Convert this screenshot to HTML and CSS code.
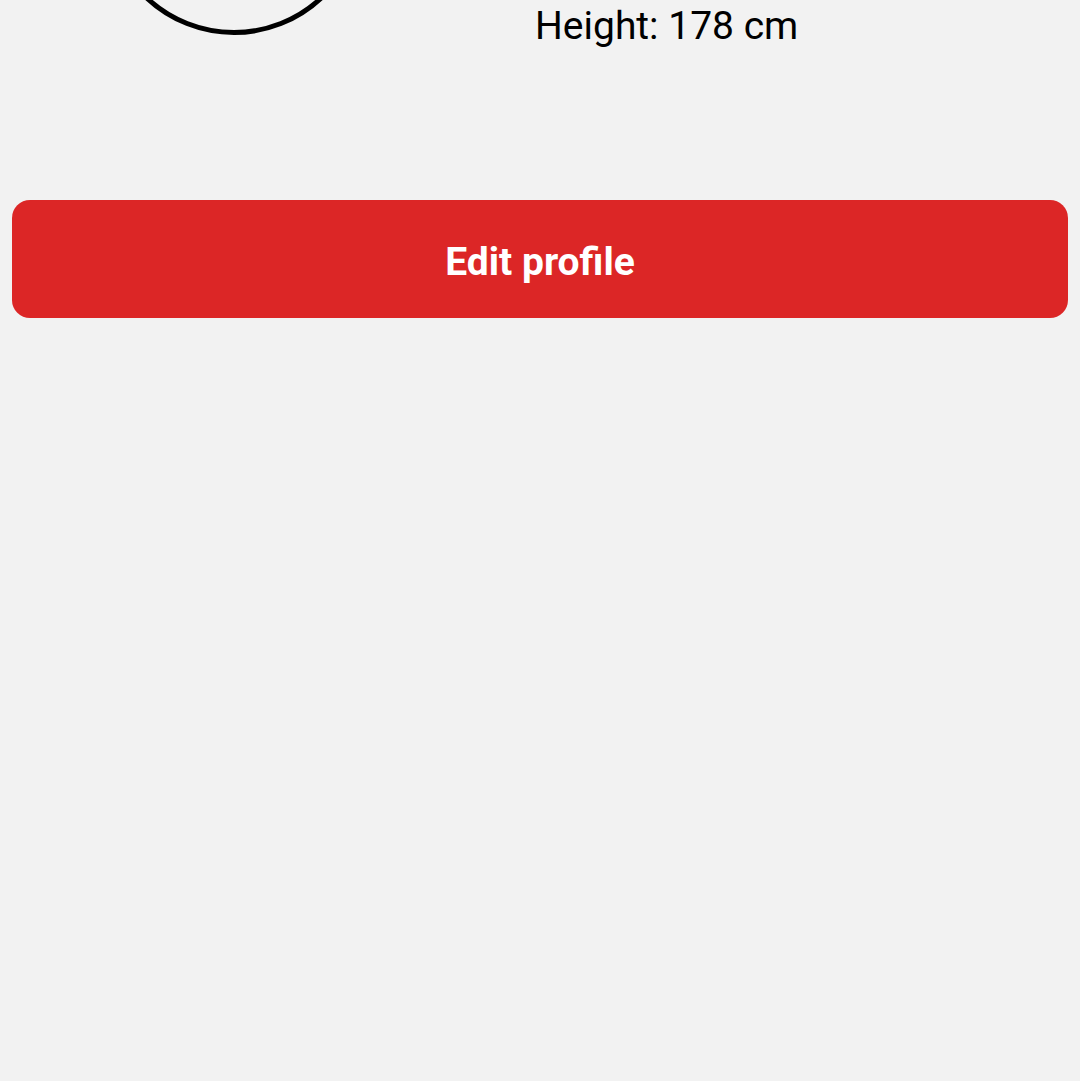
FILE: index.html
```html
<!DOCTYPE html>
<html lang="en">
<head>
<meta charset="utf-8">
<title>Profile</title>
<link rel="stylesheet" href="styles.css">
</head>
<body>
<main class="page">
  <section class="profile">
    <div class="avatar"></div>
    <div class="info">
      <p class="info-line">Height: 178 cm</p>
    </div>
  </section>
  <button class="edit-btn" type="button">Edit profile</button>
</main>
</body>
</html>
```

FILE: styles.css
```css
html, body {
  margin: 0;
  padding: 0;
  background: #f2f2f2;
  font-family: Roboto, "Noto Sans", sans-serif;
  height: 100%;
  overflow: hidden;
}

.page {
  padding: 0 12px;
}

.profile {
  display: flex;
  align-items: flex-end;
  margin-top: -225px;
}

.avatar {
  width: 260px;
  height: 260px;
  box-sizing: border-box;
  border: 5px solid #000;
  border-radius: 50%;
  margin-left: 92px;
  flex: none;
}

.info {
  margin-left: 171px;
  margin-bottom: -15px;
}

.info-line {
  margin: 0;
  font-size: 39px;
  line-height: 48px;
  color: #000;
}

.edit-btn {
  display: block;
  width: 100%;
  height: 118px;
  margin-top: 165px;
  border: none;
  border-radius: 18px;
  background: #dc2626;
  color: #fff;
  font-family: Roboto, "Noto Sans", sans-serif;
  font-weight: 700;
  font-size: 39px;
  padding: 6px 0 0;
  cursor: pointer;
}
```
